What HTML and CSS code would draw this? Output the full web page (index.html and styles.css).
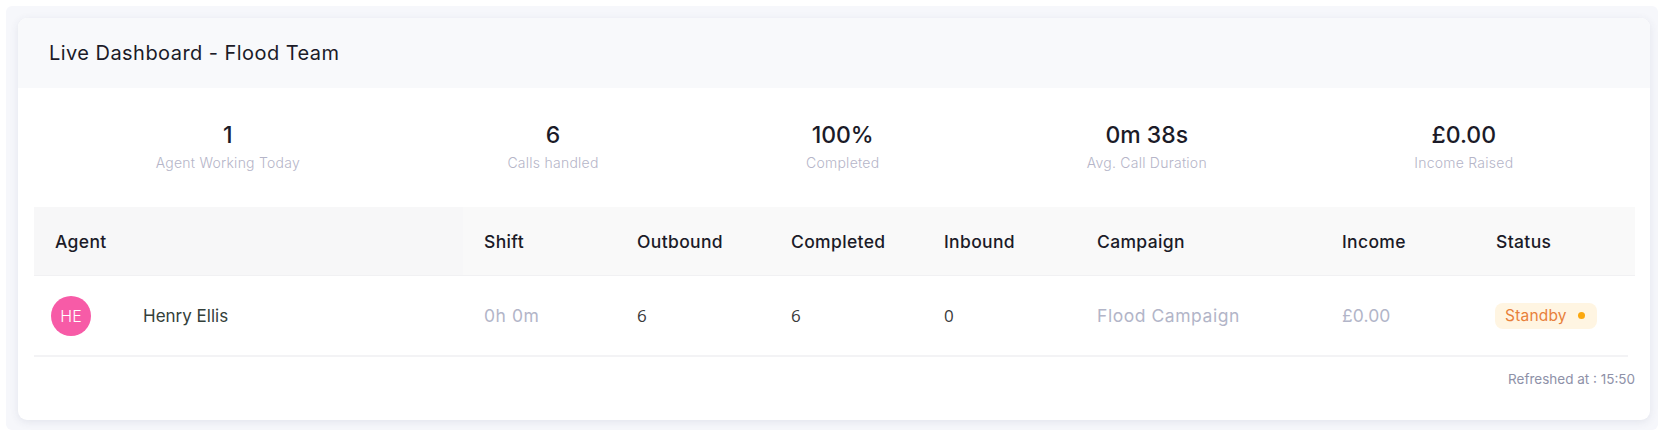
FILE: index.html
```html
<!DOCTYPE html>
<html lang="en">
<head>
<meta charset="utf-8">
<title>Live Dashboard - Flood Team</title>
<link rel="stylesheet" href="styles.css">
</head>
<body>
<div class="wrap">
  <div class="card">
    <div class="card-head">
      <h1 class="title">Live Dashboard - Flood Team</h1>
    </div>
    <div class="card-body">
      <div class="stats">
        <div class="stat"><div class="stat-num">1</div><div class="stat-label">Agent Working Today</div></div>
        <div class="stat"><div class="stat-num">6</div><div class="stat-label">Calls handled</div></div>
        <div class="stat"><div class="stat-num">100%</div><div class="stat-label">Completed</div></div>
        <div class="stat"><div class="stat-num">0m 38s</div><div class="stat-label">Avg. Call Duration</div></div>
        <div class="stat"><div class="stat-num">£0.00</div><div class="stat-label">Income Raised</div></div>
      </div>
      <div class="grid">
        <div class="th th-agent">Agent</div>
        <div class="th">Shift</div>
        <div class="th">Outbound</div>
        <div class="th">Completed</div>
        <div class="th">Inbound</div>
        <div class="th">Campaign</div>
        <div class="th">Income</div>
        <div class="th">Status</div>

        <div class="td td-avatar"><span class="avatar">HE</span></div>
        <div class="td td-name">Henry Ellis</div>
        <div class="td muted">0h 0m</div>
        <div class="td num">6</div>
        <div class="td num">6</div>
        <div class="td num">0</div>
        <div class="td muted">Flood Campaign</div>
        <div class="td muted short">£0.00</div>
        <div class="td td-status"><span class="badge">Standby<span class="dot"></span></span></div>
      </div>
      <div class="refreshed">Refreshed at : 15:50</div>
    </div>
  </div>
</div>
</body>
</html>
```
FILE: styles.css
```css
html, body {
  margin: 0;
  padding: 0;
  background: #ffffff;
}

body {
  font-family: "Inter", "Noto Sans", sans-serif;
  color: #1e1e2d;
}

.wrap {
  margin: 6px 9px 0 6px;
  padding: 12px 8px 10px 12px;
  background: #f6f7fb;
  border-radius: 6px;
}

.card {
  background: #ffffff;
  border-radius: 9px;
  box-shadow: 0 2px 8px rgba(60, 70, 110, 0.10);
  overflow: hidden;
}

.card-head {
  height: 70px;
  background: #f8f9fb;
  display: flex;
  align-items: center;
  padding: 0 31px;
}

.title {
  margin: 0;
  font-size: 20px;
  font-weight: 400;
  color: #1b1b28;
  letter-spacing: 0.45px;
}

.card-body {
  padding: 31px 15px 31px 16px;
}

.stats {
  display: flex;
  justify-content: space-around;
  padding: 0 18px;
}

.stat {
  display: flex;
  flex-direction: column;
  align-items: center;
  gap: 2px;
}

.stat-num {
  font-size: 23px;
  line-height: 32px;
  font-weight: 500;
  color: #1b1b28;
}

.stat-label {
  font-size: 14px;
  line-height: 20px;
  font-weight: 300;
  letter-spacing: 0.25px;
  color: #b5b5c8;
}

.grid {
  margin-top: 34px;
  display: grid;
  grid-template-columns: 88px 341px 153px 154px 153px 153px 245px 154px 1fr;
}

.th {
  height: 69px;
  display: flex;
  align-items: center;
  padding-left: 21px;
  background: #f9f9f9;
  font-size: 17.5px;
  font-weight: 500;
  letter-spacing: 0.35px;
  color: #1b1b28;
  border-bottom: 1px solid #f1f1f3;
  box-sizing: border-box;
}

.th-agent {
  grid-column: span 2;
  background: #f7f7f8;
}

.td {
  height: 81px;
  display: flex;
  align-items: center;
  padding-left: 21px;
  font-size: 17px;
  color: #3f4254;
  border-bottom: 2px solid #f3f3f5;
  box-sizing: border-box;
}

.td-avatar {
  padding-left: 17px;
}

.avatar {
  width: 40px;
  height: 40px;
  border-radius: 50%;
  background: #f75ba7;
  color: #ffffff;
  display: flex;
  align-items: center;
  justify-content: center;
  font-size: 16px;
  font-weight: 300;
}

.td-name {
  color: #33403a;
}

.muted {
  color: #b2b5c8;
  font-size: 17.5px;
  letter-spacing: 0.55px;
}

.short {
  letter-spacing: 0.1px;
}

.num {
  font-family: "Open Sans", "Noto Sans", sans-serif;
  color: #3a3a3a;
}

.td-status {
  padding-left: 20px;
  margin-right: 7px;
}

.badge {
  display: inline-flex;
  align-items: center;
  height: 26px;
  padding: 0 12px 0 10px;
  border-radius: 8px;
  background: #fff5e2;
  color: #e8803a;
  font-size: 15.5px;
  letter-spacing: 0.2px;
}

.dot {
  width: 7px;
  height: 7px;
  border-radius: 50%;
  background: #fba80f;
  margin-left: 11px;
}

.refreshed {
  margin-top: 12px;
  text-align: right;
  font-size: 13.5px;
  line-height: 20px;
  color: #8e91a8;
}
```
